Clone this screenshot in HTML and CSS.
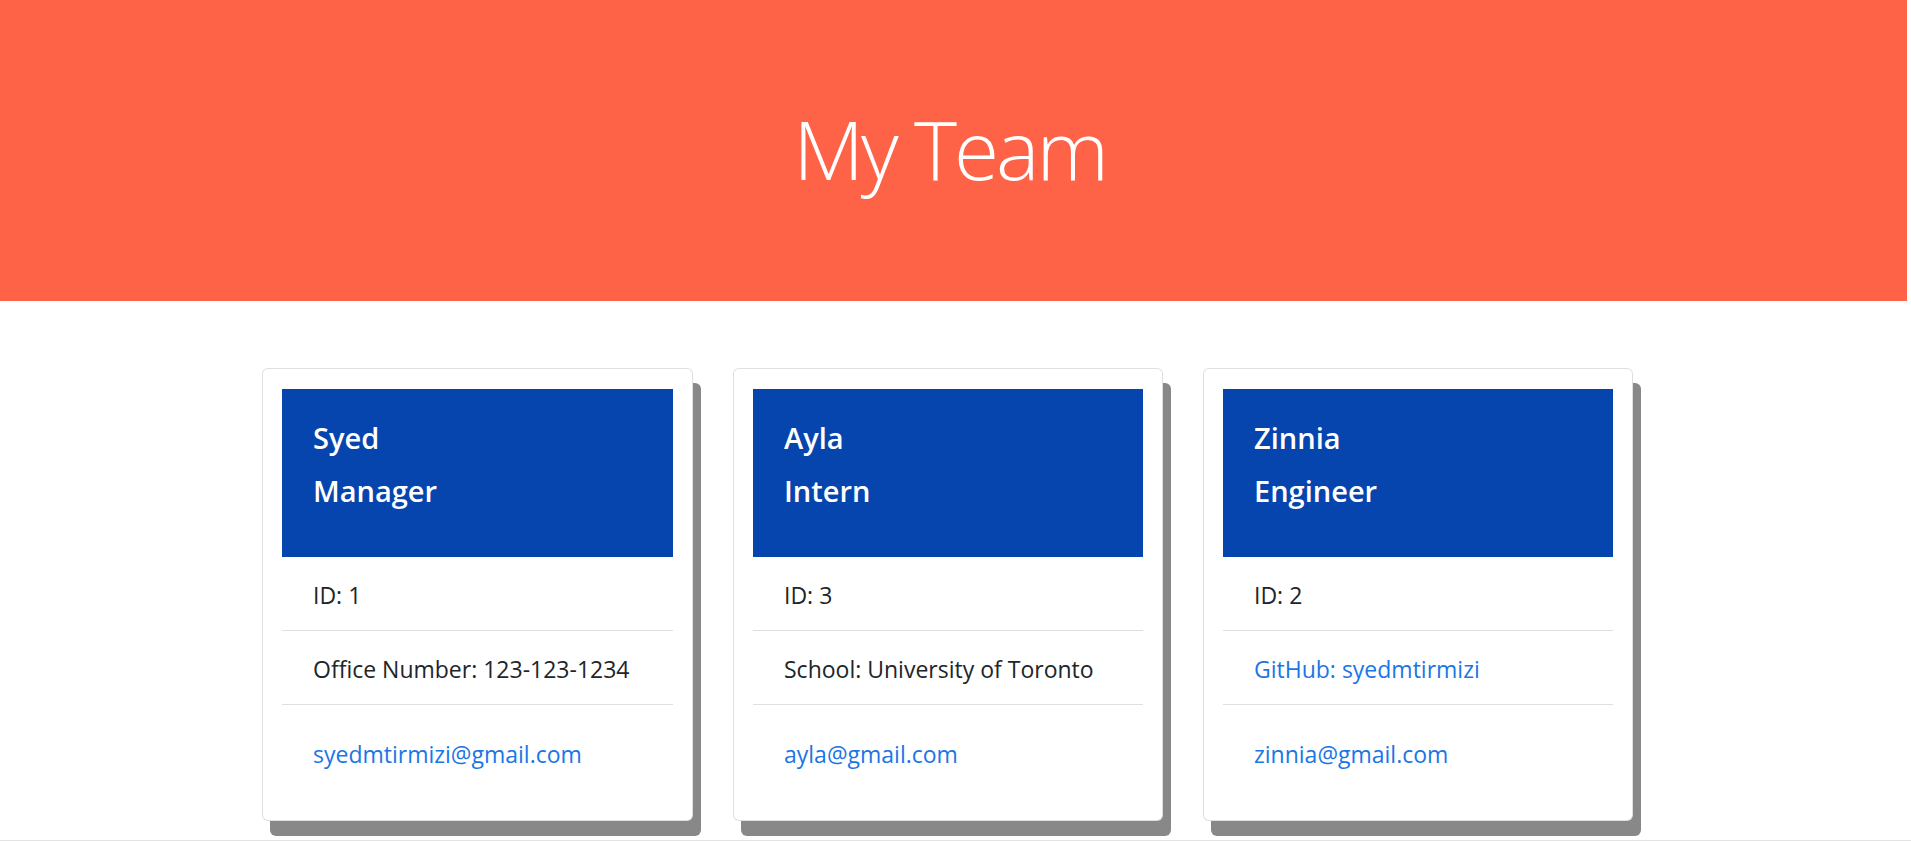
FILE: index.html
```html
<!DOCTYPE html>
<html lang="en">
<head>
<meta charset="utf-8">
<title>My Team</title>
<link rel="stylesheet" href="styles.css">
</head>
<body>
  <header class="jumbotron">
    <h1 class="title">My Team</h1>
  </header>
  <main class="team">
    <div class="card">
      <div class="card-head">
        <h2 class="card-name">Syed</h2>
        <h2 class="card-role">Manager</h2>
      </div>
      <ul class="list">
        <li class="item">ID: 1</li>
        <li class="item">Office Number: 123-123-1234</li>
        <li class="item item-last"><a class="link" href="#">syedmtirmizi@gmail.com</a></li>
      </ul>
    </div>
    <div class="card">
      <div class="card-head">
        <h2 class="card-name">Ayla</h2>
        <h2 class="card-role">Intern</h2>
      </div>
      <ul class="list">
        <li class="item">ID: 3</li>
        <li class="item">School: University of Toronto</li>
        <li class="item item-last"><a class="link" href="#">ayla@gmail.com</a></li>
      </ul>
    </div>
    <div class="card">
      <div class="card-head">
        <h2 class="card-name">Zinnia</h2>
        <h2 class="card-role">Engineer</h2>
      </div>
      <ul class="list">
        <li class="item">ID: 2</li>
        <li class="item"><a class="link" href="#">GitHub: syedmtirmizi</a></li>
        <li class="item item-last"><a class="link" href="#">zinnia@gmail.com</a></li>
      </ul>
    </div>
  </main>
  <div class="bottom-rule"></div>
</body>
</html>
```

FILE: styles.css
```css
* {
  box-sizing: border-box;
}

html, body {
  margin: 0;
  padding: 0;
  background: #ffffff;
}

body {
  font-family: "Open Sans", "Noto Sans", sans-serif;
  color: #212529;
  overflow: hidden;
}

.jumbotron {
  width: calc(100% - 4px);
  height: 301px;
  background: #ff6347;
  padding: 99px 8px 0 0;
  text-align: center;
}

.title {
  margin: 0;
  font-size: 82px;
  font-weight: 300;
  line-height: 1.2;
  letter-spacing: -3px;
  color: #ffffff;
}

.team {
  display: flex;
  gap: 40px;
  padding-left: 262px;
  margin-top: 67px;
}

.card {
  flex: 0 0 431px;
  background: #ffffff;
  border: 1px solid rgba(0, 0, 0, 0.125);
  border-radius: 6px;
  padding: 20px 19px 20px;
  box-shadow: 8px 15px 0 #888888;
}

.card + .card {
  flex-basis: 430px;
}

.card-head {
  background: #0645ad;
  padding: 31px 31px 30px;
  color: #ffffff;
}

.card-name,
.card-role {
  margin: 0 0 18px;
  font-size: 29px;
  font-weight: 600;
  line-height: 36px;
}

.card-name {
  margin-bottom: 17px;
}

.list {
  list-style: none;
  margin: 0;
  padding: 0;
}

.item {
  padding: 20px 31px 17px;
  font-size: 23px;
  line-height: 36px;
  border-bottom: 1px solid rgba(0, 0, 0, 0.125);
}

.item-last {
  padding-top: 31px;
  padding-bottom: 28px;
  border-bottom: none;
}

.link {
  color: #1a76e6;
  text-decoration: none;
}

.bottom-rule {
  margin-top: 19px;
  height: 1px;
  background: #e3e3e3;
}
```
